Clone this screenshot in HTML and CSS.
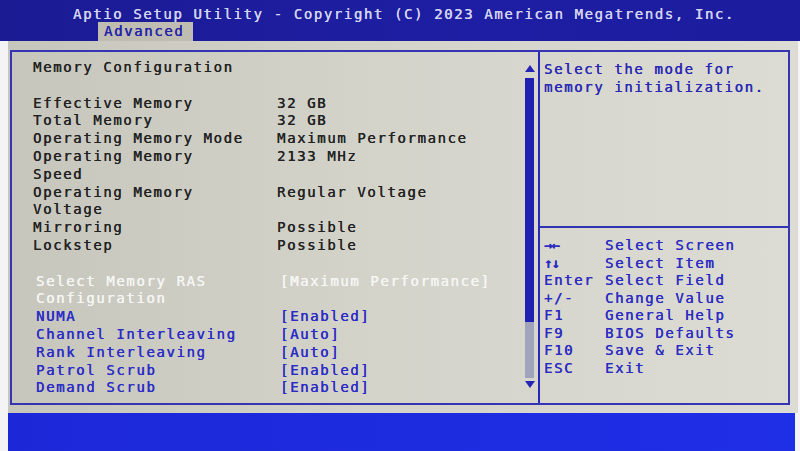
FILE: index.html
```html
<!DOCTYPE html>
<html lang="en">
<head>
	<meta charset="UTF-8">
	<title>Aptio Setup Utility</title>
	<link rel="stylesheet" href="styles.css">
</head>
<body>
	<div class="screen">
		<header class="header">
			<div class="title">Aptio Setup Utility - Copyright (C) 2023 American Megatrends, Inc.</div>
			<div class="tabs">
				<div class="tab">Advanced</div>
			</div>
		</header>
		<main class="body">
			<div class="frame">
				<section class="left-panel">
					<div class="list">
						<div class="row"><span class="label">Memory Configuration</span></div>
						<div class="row blank"></div>
						<div class="row"><span class="label">Effective Memory</span><span class="value">32 GB</span></div>
						<div class="row"><span class="label">Total Memory</span><span class="value">32 GB</span></div>
						<div class="row"><span class="label">Operating Memory Mode</span><span class="value">Maximum Performance</span></div>
						<div class="row"><span class="label">Operating Memory Speed</span><span class="value">2133 MHz</span></div>
						<div class="row"><span class="label">Operating Memory Voltage</span><span class="value">Regular Voltage</span></div>
						<div class="row"><span class="label">Mirroring</span><span class="value">Possible</span></div>
						<div class="row"><span class="label">Lockstep</span><span class="value">Possible</span></div>
						<div class="row blank"></div>
						<div class="row item selected"><span class="label">Select Memory RAS Configuration</span><span class="value">[Maximum Performance]</span></div>
						<div class="row item"><span class="label">NUMA</span><span class="value">[Enabled]</span></div>
						<div class="row item"><span class="label">Channel Interleaving</span><span class="value">[Auto]</span></div>
						<div class="row item"><span class="label">Rank Interleaving</span><span class="value">[Auto]</span></div>
						<div class="row item"><span class="label">Patrol Scrub</span><span class="value">[Enabled]</span></div>
						<div class="row item"><span class="label">Demand Scrub</span><span class="value">[Enabled]</span></div>
					</div>
					<div class="scroll">
						<div class="arrow-up"></div>
						<div class="thumb"></div>
						<div class="track"></div>
						<div class="arrow-down"></div>
					</div>
				</section>
				<aside class="right-panel">
					<div class="help">Select the mode for memory initialization.</div>
					<div class="keys">
						<div class="key-row"><span class="key icon">→←</span><span>Select Screen</span></div>
						<div class="key-row"><span class="key icon">↑↓</span><span>Select Item</span></div>
						<div class="key-row"><span class="key">Enter</span><span>Select Field</span></div>
						<div class="key-row"><span class="key">+/-</span><span>Change Value</span></div>
						<div class="key-row"><span class="key">F1</span><span>General Help</span></div>
						<div class="key-row"><span class="key">F9</span><span>BIOS Defaults</span></div>
						<div class="key-row"><span class="key">F10</span><span>Save &amp; Exit</span></div>
						<div class="key-row"><span class="key">ESC</span><span>Exit</span></div>
					</div>
				</aside>
			</div>
		</main>
		<footer class="footer"></footer>
	</div>
</body>
</html>
```

FILE: styles.css
```css
*,
*::before,
*::after {
	box-sizing: border-box;
	margin: 0;
	padding: 0;
}

body {
	background-color: #f4f4f6;
	font-family: "DejaVu Sans Mono", "Liberation Mono", monospace;
	font-size: 14px;
	letter-spacing: 1.6px;
	line-height: 17.8px;
	text-shadow: 0.35px 0 currentColor;
	overflow: hidden;
}

.screen {
	width: 800px;
	height: 451px;
	display: flex;
	flex-direction: column;
}

/* top bar */
.header {
	height: 41px;
	background: linear-gradient(90deg, #1b1b94 0%, #1e1ea4 60%, #1c1c9e 100%);
	color: #d4d4f0;
}

.title {
	padding-left: 73px;
	padding-top: 6px;
	height: 22px;
}

.tabs {
	padding-left: 98px;
}

.tab {
	width: 95px;
	height: 19px;
	padding-left: 6px;
	padding-top: 1px;
	background-color: #bfbdb2;
	color: #2323a8;
}

/* main area */
.body {
	height: 372px;
	margin-left: 8px;
	margin-right: 2px;
	padding: 9px 8px 8px 2px;
	background: linear-gradient(90deg, #c6c6bc 0%, #d3d3ca 45%, #dcdcd4 100%);
}

.frame {
	height: 100%;
	display: flex;
	border: 2px solid #3434b4;
}

.left-panel {
	width: 528px;
	display: flex;
	border-right: 2px solid #2828b8;
}

.list {
	flex: 1;
	padding-top: 7px;
	padding-left: 21px;
}

.row {
	display: grid;
	grid-template-columns: 215px 1fr;
	column-gap: 29px;
	color: #222222;
}

.row.blank {
	height: 17.8px;
}

.row.item {
	color: #2b2bc6;
	padding-left: 3px;
}

.row.selected {
	color: #f6f6f4;
}

/* scroll bar */
.scroll {
	width: 9px;
	margin-right: 4px;
	padding-top: 13px;
	display: flex;
	flex-direction: column;
	align-items: center;
}

.arrow-up,
.arrow-down {
	width: 0;
	height: 0;
	border-left: 5px solid transparent;
	border-right: 5px solid transparent;
}

.arrow-up {
	border-bottom: 7px solid #2424b6;
	margin-bottom: 6px;
}

.thumb {
	width: 9px;
	height: 244px;
	background-color: #1f1fb2;
}

.track {
	width: 9px;
	height: 56px;
	background-color: #b6b8c6;
	background-image: radial-gradient(#8888b0 0.6px, transparent 0.8px);
	background-size: 2px 2px;
}

.arrow-down {
	border-top: 7px solid #2424b6;
	margin-top: 3px;
}

/* help panel */
.right-panel {
	flex: 1;
	display: flex;
	flex-direction: column;
	color: #2828b4;
}

.help {
	height: 176px;
	padding: 9px 16px 0 4px;
	border-bottom: 2px solid #3232b4;
}

.keys {
	padding-top: 9px;
	padding-left: 4px;
	line-height: 17.5px;
	color: #2c2cc2;
}

.key-row {
	display: flex;
}

.key {
	width: 61px;
	flex-shrink: 0;
}

.key.icon {
	font-weight: bold;
	letter-spacing: -1px;
}

/* bottom bar */
.footer {
	height: 38px;
	margin-left: 8px;
	margin-right: 5px;
	background: linear-gradient(90deg, #1c28d8 0%, #1f2fe6 100%);
}
```
